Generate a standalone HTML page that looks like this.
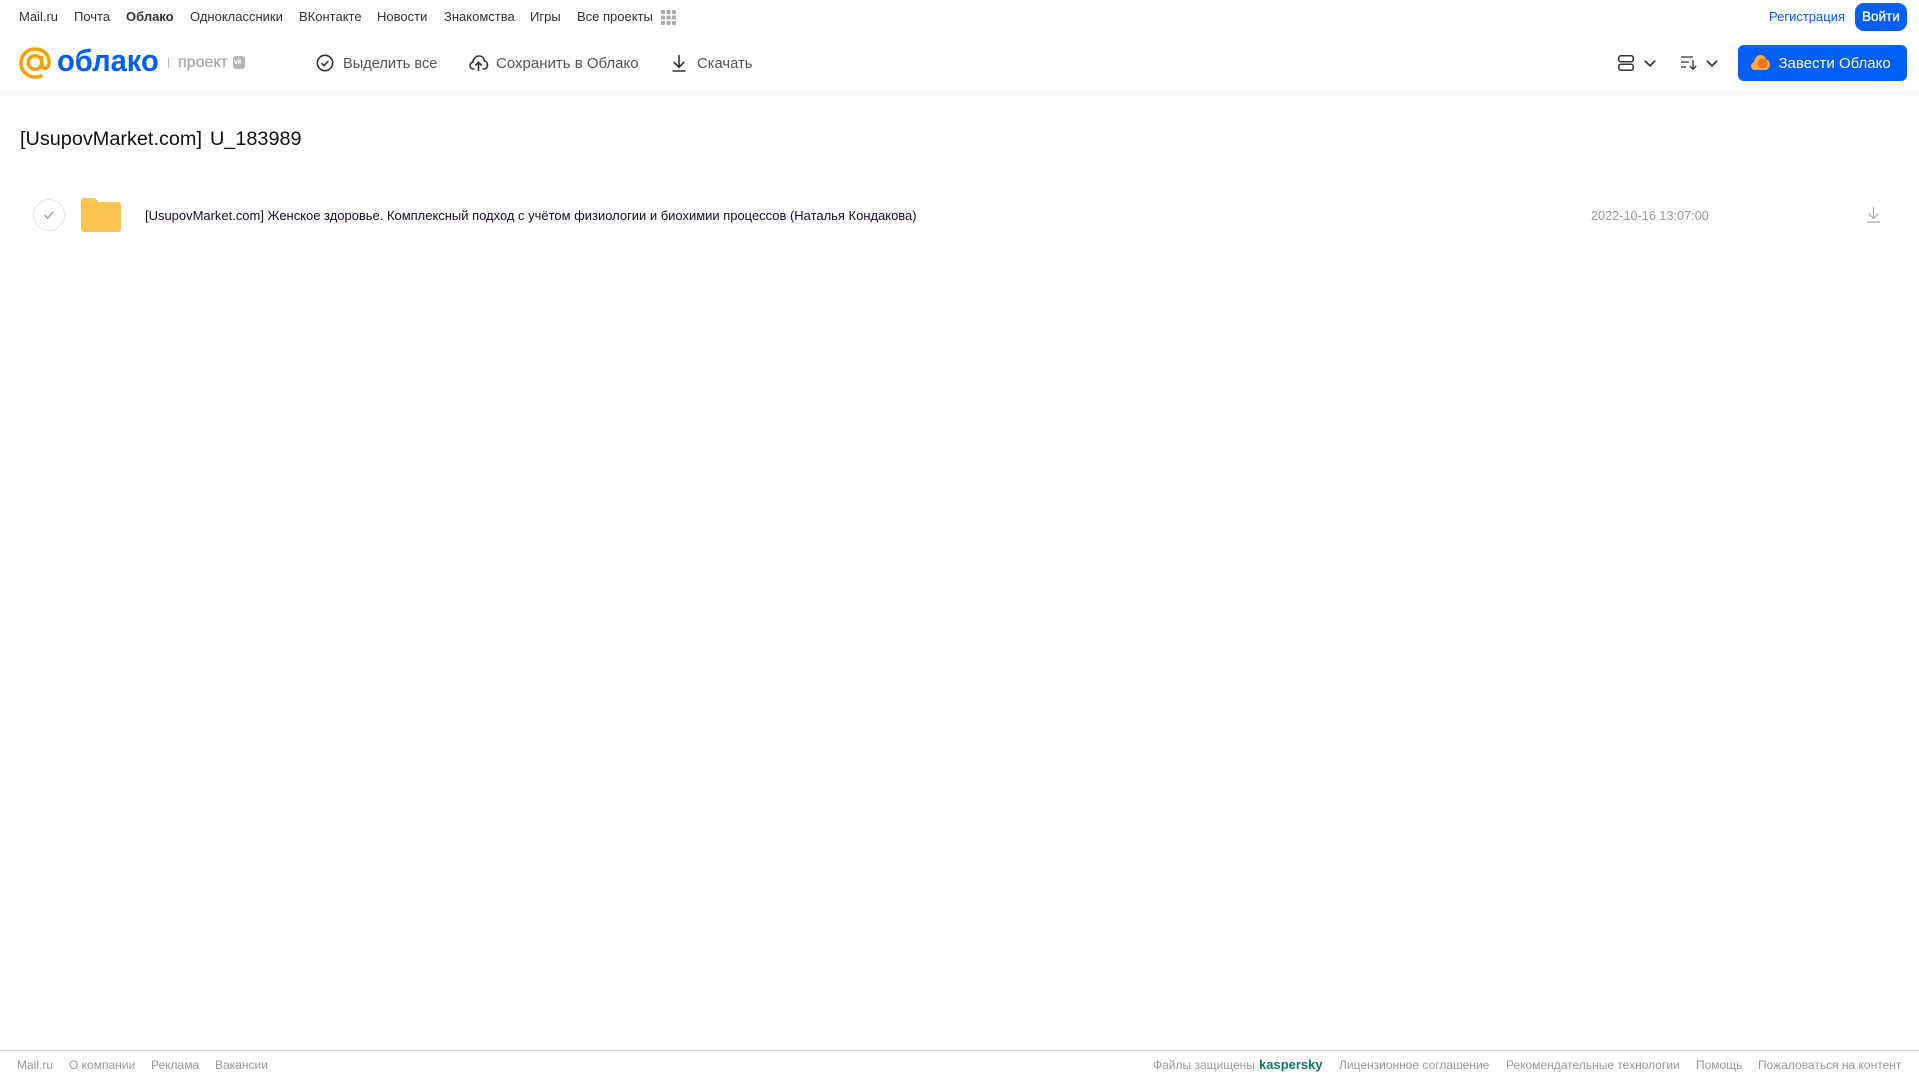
<!DOCTYPE html>
<html lang="ru"><head><meta charset="utf-8"><title>Облако</title>
<style>
html,body{margin:0;padding:0;width:1919px;height:1079px;overflow:hidden;background:#fff;font-family:"Liberation Sans",sans-serif}
.t{position:absolute;white-space:nowrap;line-height:16px}
.n{top:9px;font-size:13px;color:#333}
.b{top:55.500px;font-size:15px;color:#555}
.f{top:1057px;font-size:12px;color:#999}
svg{position:absolute;overflow:visible}
#hd{position:absolute;left:0;top:0;width:1919px;height:91px;background:#fff;box-shadow:0 1px 8px rgba(0,0,0,.07)}
#ln{position:absolute;left:0;top:1050px;width:1919px;height:1px;background:#d9d9d9}
.btn{position:absolute;background:#005ff9}
</style></head><body>
<div id="hd"></div>
<span class="t n" style="left:19px">Mail.ru</span>
<span class="t n" style="left:74px">Почта</span>
<span class="t n" style="left:126px;font-weight:bold">Облако</span>
<span class="t n" style="left:190px">Одноклассники</span>
<span class="t n" style="left:299px">ВКонтакте</span>
<span class="t n" style="left:377px">Новости</span>
<span class="t n" style="left:444px">Знакомства</span>
<span class="t n" style="left:530px">Игры</span>
<span class="t n" style="left:577px">Все проекты</span>
<svg style="left:661px;top:10px" width="15" height="15" fill="#aaa"><rect x="0" y="0" width="4" height="4" rx="1"/><rect x="5.500" y="0" width="4" height="4" rx="1"/><rect x="11" y="0" width="4" height="4" rx="1"/><rect x="0" y="5.500" width="4" height="4" rx="1"/><rect x="5.500" y="5.500" width="4" height="4" rx="1"/><rect x="11" y="5.500" width="4" height="4" rx="1"/><rect x="0" y="11" width="4" height="4" rx="1"/><rect x="5.500" y="11" width="4" height="4" rx="1"/><rect x="11" y="11" width="4" height="4" rx="1"/></svg>
<span class="t" style="left:1769px;top:9px;font-size:13px;color:#005ff9">Регистрация</span>
<div class="btn" style="left:1855px;top:3px;width:52px;height:28px;border-radius:9px"></div>
<span class="t" style="left:1862px;top:9px;font-size:13.500px;color:#fff;-webkit-text-stroke:.3px #fff">Войти</span>

<svg style="left:19px;top:47px" width="32" height="32" viewBox="0 0 33 33" fill="none" stroke="#ff9e00" stroke-width="3.600"><circle cx="16.500" cy="16" r="7"/><path d="M23.500 9v9.500c0 5 7.500 4.500 7.500-2.500C31 7.500 24.500 2 16.500 2S2 8.500 2 16.500 8.500 31 16.500 31c3 0 5.500-.7 7.500-2"/></svg>
<span class="t" style="left:57px;top:43px;font-size:31px;line-height:36px;font-weight:bold;color:#005ff9;transform:scaleX(.94);transform-origin:0 0">облако</span>
<div style="position:absolute;left:168px;top:58px;width:1px;height:10px;background:#bbb"></div>
<span class="t" style="left:178px;top:55px;font-size:16px;color:#aaa;-webkit-text-stroke:.35px #aaa">проект</span>
<div style="position:absolute;left:233px;top:56px;width:12px;height:13px;background:#b5b5b5;border-radius:3px"></div>
<span class="t" style="left:234px;top:58px;font-size:7px;line-height:9px;font-weight:bold;color:#fff">vk</span>

<svg style="left:316px;top:54px" width="18" height="18" viewBox="0 0 18 18" fill="none" stroke="#333" stroke-width="1.600"><circle cx="9" cy="9" r="7.700"/><path d="M5.500 9.200l2.500 2.400 4.500-4.600"/></svg>
<span class="t b" style="left:343px;font-size:14.600px">Выделить все</span>
<svg style="left:469px;top:54px" width="19" height="18" viewBox="0 0 19 18" fill="none" stroke="#333" stroke-width="1.600"><path d="M5.500 15H4.500C2.500 15 1 13.500 1 11.500 1 9.800 2.200 8.500 3.800 8.200 4.200 5 6.500 2 10 2c3 0 5 2 5.500 5 1.800.4 3 2 3 4 0 2.300-1.500 4-3.500 4h-1.500"/><path d="M9.500 17V8.500M6.300 11.500l3.200-3.200 3.200 3.200"/></svg>
<span class="t b" style="left:496px">Сохранить в Облако</span>
<svg style="left:672px;top:54px" width="14" height="18" viewBox="0 0 14 18" fill="none" stroke="#333" stroke-width="1.600"><path d="M7 1v12M1.800 8l5.200 5.200L12.200 8M.5 17h13"/></svg>
<span class="t b" style="left:697px;font-size:14.800px">Скачать</span>

<svg style="left:1618px;top:55px" width="16" height="16" viewBox="0 0 16 16" fill="none" stroke="#333" stroke-width="1.500"><rect x=".8" y=".8" width="14.400" height="6" rx="2"/><rect x=".8" y="9.200" width="14.400" height="6" rx="2"/></svg>
<svg style="left:1644px;top:60px" width="12" height="7" viewBox="0 0 12 7" fill="none" stroke="#333" stroke-width="1.700"><path d="M.8.800L6 5.800 11.200.8"/></svg>
<svg style="left:1681px;top:56px" width="16" height="14" viewBox="0 0 16 14" fill="none" stroke="#333" stroke-width="1.300"><path d="M0 1h12M0 6h8M0 11h5M12 4v9M8.800 10l3.200 3.200 3.200-3.200"/></svg>
<svg style="left:1706px;top:60px" width="12" height="7" viewBox="0 0 12 7" fill="none" stroke="#333" stroke-width="1.700"><path d="M.8.800L6 5.800 11.200.8"/></svg>
<div class="btn" style="left:1738px;top:45px;width:169px;height:36px;border-radius:6px"></div>
<svg style="left:1751px;top:55px" width="19" height="15" viewBox="0 0 19 15"><path d="M4 15C1.500 15 0 13.300 0 11c0-2 1.300-3.500 3-3.800C3.500 3 6.500 0 9.500 0c3 0 5 2 5.500 4.500 2.400.4 4 2.300 4 5 0 3-2.200 5.500-5 5.500z" fill="#ffb02e"/><circle cx="11.500" cy="8.500" r="5" fill="#f4701f"/></svg>
<span class="t" style="left:1778.500px;top:55.500px;font-size:15px;color:#fff">Завести Облако</span>

<span class="t" style="left:20px;top:127px;line-height:24px;font-size:19.850px;word-spacing:2.500px;color:#111">[UsupovMarket.com] U_183989</span>
<div style="position:absolute;left:33px;top:199px;width:30px;height:30px;border:1px solid #e6e6e6;border-radius:50%"></div>
<svg style="left:44px;top:211px" width="10" height="8" viewBox="0 0 10 8" fill="none" stroke="#999" stroke-width="1.300"><path d="M.7 4l3 3L9.300.8"/></svg>
<svg style="left:81px;top:198px" width="40" height="34" viewBox="0 0 40 34"><path d="M0 3a3 3 0 013-3h9c2 0 3 .7 4 2l1 2h20a3 3 0 013 3v24a3 3 0 01-3 3H3a3 3 0 01-3-3z" fill="#ffc552"/><path d="M0 9h40" stroke="#ffb02e" stroke-opacity=".4"/></svg>
<span class="t" style="left:145px;top:208px;font-size:12.970px;color:#1a0a2a">[UsupovMarket.com] Женское здоровье. Комплексный подход с учётом физиологии и биохимии процессов (Наталья Кондакова)</span>
<span class="t" style="left:1591px;top:208px;font-size:12.700px;color:#999">2022-10-16 13:07:00</span>
<svg style="left:1867px;top:207px" width="13" height="16" viewBox="0 0 13 16" fill="none" stroke="#aaa" stroke-width="1.200"><path d="M6.500 0v11M1.500 6.500l5 5 5-5M0 15h13"/></svg>

<div id="ln"></div>
<span class="t f" style="left:17px">Mail.ru</span>
<span class="t f" style="left:69px">О компании</span>
<span class="t f" style="left:151px">Реклама</span>
<span class="t f" style="left:215px">Вакансии</span>
<span class="t f" style="left:1153px">Файлы защищены</span>
<span class="t" style="left:1259px;top:1057px;font-size:13px;font-weight:bold;color:#127a66">kaspersky</span>
<span class="t f" style="left:1339px">Лицензионное соглашение</span>
<span class="t f" style="left:1506px">Рекомендательные технологии</span>
<span class="t f" style="left:1696px">Помощь</span>
<span class="t f" style="left:1758px">Пожаловаться на контент</span>
</body></html>
